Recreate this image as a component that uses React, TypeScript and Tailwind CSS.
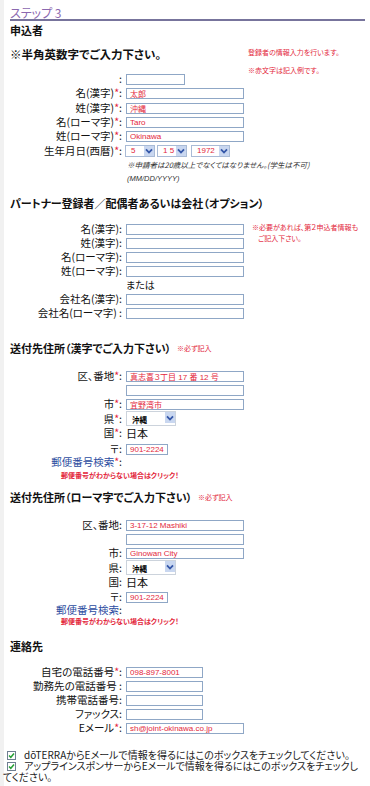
import React from 'react';

const Chevron = () => (
  <svg width="8" height="6" viewBox="0 0 8 6">
    <path d="M1 1.3 L4 4.5 L7 1.3" stroke="#3557a8" strokeWidth="1.8" fill="none" />
  </svg>
);

function Field({ w = 'w-[118px]', v = '' }: { w?: string; v?: string }) {
  return (
    <input
      readOnly
      value={v}
      className={`${w} h-[11px] border border-[#8fa7c6] bg-white pl-[3px] text-[8px] leading-[9px] text-[#e3283c] font-['Liberation_Sans','Noto_Sans_CJK_JP',sans-serif] outline-none`}
    />
  );
}

function Sel({ w, v }: { w: string; v: string }) {
  return (
    <div className={`${w} h-[12px] border border-[#a9bbd6] bg-white flex items-stretch`}>
      <span className="flex-1 text-[8px] leading-[10px] text-[#e3283c] pl-[5px] font-['Liberation_Sans',sans-serif]">{v}</span>
      <span className="w-[10px] bg-[#c9d7f0] flex items-center justify-center">
        <Chevron />
      </span>
    </div>
  );
}

function PrefSel() {
  return (
    <div className="w-[50px] h-[15px] border border-[#ccd3dc] bg-white flex items-start">
      <span className="flex-1 self-end text-[7.5px] font-bold leading-[8px] pl-[5px] pb-[1px] text-black">沖縄</span>
      <span className="w-[10px] h-[11px] bg-[#c9d7f0] flex items-center justify-center">
        <Chevron />
      </span>
    </div>
  );
}

function Row({
  label,
  req,
  blue,
  sp,
  noColon,
  children,
  h = 'h-[14px]',
  cls = '',
}: {
  label: string;
  req?: boolean;
  blue?: boolean;
  sp?: boolean;
  noColon?: boolean;
  children?: React.ReactNode;
  h?: string;
  cls?: string;
}) {
  return (
    <div className={`flex items-center ${h} ${cls}`}>
      <div
        className={`w-[118px] shrink-0 text-right text-[10.5px] leading-[12px] whitespace-nowrap ${blue ? 'text-[#2c4ca0]' : 'text-[#111]'}`}
      >
        {label}
        {req && <span className="text-[#e3283c]">*</span>}
        {sp && ' '}
        {!noColon && <span className="text-[#111]">:</span>}
      </div>
      <div className="ml-[4px] flex items-center">{children}</div>
    </div>
  );
}

function Check() {
  return (
    <svg width="9" height="9" viewBox="0 0 9 9" className="inline-block align-[-1px] mr-[8px] ml-[4px]">
      <rect x="0.5" y="0.5" width="8" height="8" fill="#fff" stroke="#6f7f92" />
      <path d="M2 4.5 L3.8 6.3 L7 2.6" stroke="#26a035" strokeWidth="1.5" fill="none" />
    </svg>
  );
}

export default function App() {
  return (
    <div className="w-[370px] min-h-[786px] bg-white flex font-['Noto_Sans_CJK_JP',sans-serif] [font-feature-settings:'palt'] text-[#111]">
      <div className="w-[4px] shrink-0 bg-[#f1f1f1]" />
      <div className="flex-1 flex flex-col">
        {/* Step header */}
        <div className="h-[19px] pt-[7px] pl-[6px] text-[12px] leading-[12px] text-[#8b68b0]">ステップ 3</div>
        <div className="h-[2px] ml-[6px] w-[355px] bg-[#77749c]" />
        <div className="mt-[2px] h-[14px] pl-[6px] text-[11px] leading-[14px] font-bold">申込者</div>

        {/* Applicant */}
        <div className="mt-[10px] flex">
          <div className="w-[244px] shrink-0 flex flex-col">
            <div className="h-[14px] pl-[6px] text-[11.5px] leading-[14px] font-bold whitespace-nowrap">※半角英数字でご入力下さい。</div>
            <Row label="" cls="mt-[11px]">
              <Field w="w-[59px]" />
            </Row>
            <Row label="名(漢字)" req>
              <Field v="太郎" />
            </Row>
            <Row label="姓(漢字)" req cls="mt-[1px]">
              <Field v="沖縄" />
            </Row>
            <Row label="名(ローマ字)" req>
              <Field v="Taro" />
            </Row>
            <Row label="姓(ローマ字)" req>
              <Field v="Okinawa" />
            </Row>
            <Row label="生年月日(西暦)" req cls="mt-[1px]">
              <div className="flex -ml-[1px]">
                <Sel w="w-[30px]" v="5" />
                <div className="ml-[2px]">
                  <Sel w="w-[30px]" v="1 5" />
                </div>
                <div className="ml-[4px]">
                  <Sel w="w-[39px]" v="1972" />
                </div>
              </div>
            </Row>
          </div>
          <div className="flex flex-col text-[7px] leading-[10px] text-[#e3283c] whitespace-nowrap">
            <div>登録者の情報入力を行います。</div>
            <div className="mt-[8px]">※赤文字は記入例です。</div>
          </div>
        </div>
        <div className="mt-[2px] pl-[123px] text-[7.5px] leading-[10px] italic text-[#333] whitespace-nowrap">
          ※申請者は20歳以上でなくてはなりません。(学生は不可)
        </div>
        <div className="mt-[4px] pl-[123px] text-[7.5px] leading-[10px] italic text-[#333] font-['Liberation_Sans',sans-serif]">
          (MM/DD/YYYY)
        </div>

        {/* Partner */}
        <div className="mt-[12px] h-[14px] pl-[6px] text-[11px] leading-[14px] font-bold whitespace-nowrap">
          パートナー登録者／配偶者あるいは会社（オプション）
        </div>
        <div className="mt-[12px] flex">
          <div className="w-[248px] shrink-0 flex flex-col">
            <Row label="名(漢字)">
              <Field />
            </Row>
            <Row label="姓(漢字)">
              <Field />
            </Row>
            <Row label="名(ローマ字)">
              <Field />
            </Row>
            <Row label="姓(ローマ字)">
              <Field />
            </Row>
            <div className="h-[14px] pl-[122px] text-[10px] leading-[14px]">または</div>
            <Row label="会社名(漢字)">
              <Field />
            </Row>
            <Row label="会社名(ローマ字)" sp>
              <Field />
            </Row>
          </div>
          <div className="flex flex-col text-[7px] leading-[10px] text-[#e3283c] whitespace-nowrap">
            <div>※必要があれば、第２申込者情報も</div>
            <div className="mt-[1px] pl-[6px]">ご記入下さい。</div>
          </div>
        </div>

        {/* Address Kanji */}
        <div className="mt-[21px] h-[14px] pl-[6px] text-[11px] leading-[14px] font-bold whitespace-nowrap flex items-center">
          送付先住所（漢字でご入力下さい）
          <span className="ml-[6px] text-[7px] font-normal text-[#e3283c]">※必ず記入</span>
        </div>
        <Row label="区、番地" req cls="mt-[14px]">
          <Field v="真志喜３丁目 17 番 12 号" />
        </Row>
        <Row label="" noColon>
          <Field />
        </Row>
        <Row label="市" req>
          <Field v="宜野湾市" />
        </Row>
        <Row label="県" req h="h-[15px]">
          <PrefSel />
        </Row>
        <Row label="国" req>
          <span className="text-[11px] leading-[12px]">日本</span>
        </Row>
        <Row label="〒" cls="mt-[2px]">
          <Field w="w-[42px]" v="901-2224" />
        </Row>
        <Row label="郵便番号検索" req blue h="h-[12px]" />
        <div className="mt-[2px] pl-[57px] text-[7px] leading-[10px] font-bold text-[#e3283c]">
          郵便番号がわからない場合はクリック！
        </div>

        {/* Address Roman */}
        <div className="mt-[10px] h-[14px] pl-[6px] text-[11px] leading-[14px] font-bold whitespace-nowrap flex items-center">
          送付先住所（ローマ字でご入力下さい）
          <span className="ml-[6px] text-[7px] font-normal text-[#e3283c]">※必ず記入</span>
        </div>
        <Row label="区、番地" cls="mt-[14px]">
          <Field v="3-17-12 Mashiki" />
        </Row>
        <Row label="" noColon>
          <Field />
        </Row>
        <Row label="市">
          <Field v="Ginowan City" />
        </Row>
        <Row label="県" h="h-[15px]">
          <PrefSel />
        </Row>
        <Row label="国">
          <span className="text-[11px] leading-[12px]">日本</span>
        </Row>
        <Row label="〒" cls="mt-[1px]">
          <Field w="w-[42px]" v="901-2224" />
        </Row>
        <Row label="郵便番号検索" blue h="h-[12px]" />
        <div className="pl-[57px] text-[7px] leading-[10px] font-bold text-[#e3283c]">
          郵便番号がわからない場合はクリック！
        </div>

        {/* Contact */}
        <div className="mt-[13px] h-[14px] pl-[6px] text-[11px] leading-[14px] font-bold">連絡先</div>
        <Row label="自宅の電話番号" req cls="mt-[12px]">
          <Field w="w-[77px]" v="098-897-8001" />
        </Row>
        <Row label="勤務先の電話番号" sp>
          <Field w="w-[77px]" />
        </Row>
        <Row label="携帯電話番号">
          <Field w="w-[77px]" />
        </Row>
        <Row label="ファックス">
          <Field w="w-[77px]" />
        </Row>
        <Row label="Eメール" req>
          <Field v="sh@joint-okinawa.co.jp" />
        </Row>

        {/* Checkboxes */}
        <div className="mt-[14px] -ml-[1px] w-[362px] text-[10px] leading-[11px] text-[#222]">
          <p>
            <Check />
            dōTERRAからEメールで情報を得るにはこのボックスをチェックしてください。
          </p>
          <p>
            <Check />
            アップラインスポンサーからEメールで情報を得るにはこのボックスをチェックしてください。
          </p>
        </div>
      </div>
    </div>
  );
}
